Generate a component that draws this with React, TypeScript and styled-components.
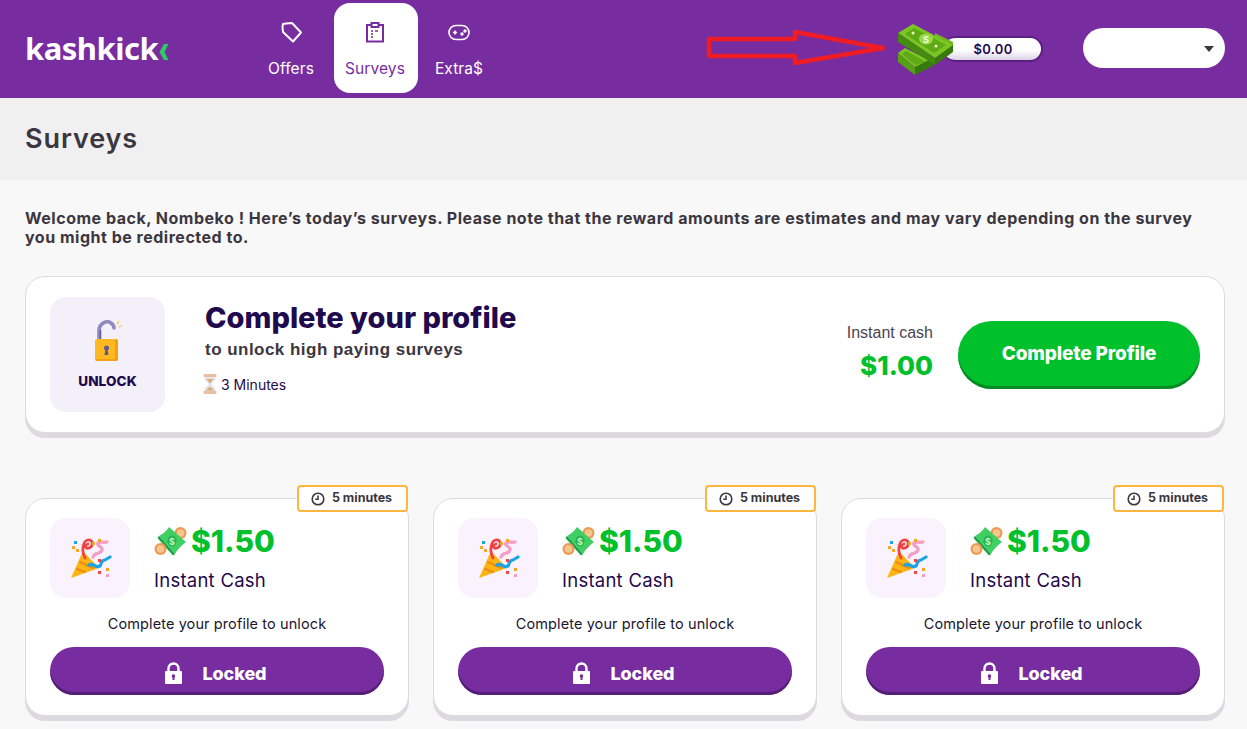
import React from "react";
import styled, { createGlobalStyle } from "styled-components";

const Global = createGlobalStyle`
  html, body { margin: 0; padding: 0; background: #f8f8f8; }
  body { font-family: Inter, "Noto Sans", sans-serif; overflow: hidden; }
  * { box-sizing: border-box; }
`;

const Page = styled.div`width: 1247px; height: 729px; overflow: hidden; position: relative;`;

const Header = styled.header`
  height: 98px; background: #772ca0; display: flex; align-items: flex-start; padding: 3px 22px 0 25px;
`;
const Logo = styled.div`
  width: 225px; height: 90px; display: flex; align-items: center; gap: 1px;
  color: #fff; font-family: "Noto Sans", sans-serif; font-weight: 700; font-size: 31px; letter-spacing: -0.5px;
`;
const Nav = styled.nav`display: flex;`;
const NavItem = styled.a<{ $active?: boolean }>`
  width: 84px; height: 90px; border-radius: 16px; display: flex; flex-direction: column; align-items: center;
  padding: 17px 2px 0 0; gap: 15px;
  background: ${p => (p.$active ? "#fff" : "transparent")};
  color: ${p => (p.$active ? "#772ca0" : "#fff")};
  font-size: 15.5px; letter-spacing: 0.1px; line-height: 20px;
  svg { display: block; }
`;
const RightGroup = styled.div`margin-left: auto; display: flex; align-items: center; height: 90px;`;
const Wallet = styled.div`
  width: 100px; height: 26px; margin-right: 40px; margin-top: 2px; position: relative;
  border-radius: 14px; background: linear-gradient(#fff 55%, #dcd3e6);
  border-top: 2px solid #5a1f80; border-bottom: 2px solid #5a1f80; border-right: 2px solid #5a1f80;
  display: flex; align-items: center; justify-content: center; padding-left: 2px;
  color: #1f0a4d; font-size: 13px; font-weight: 600; letter-spacing: .3px;
`;
const WalletIcon = styled.svg`position: absolute; left: -47px; top: -14px;`;
const Arrow = styled.svg`position: absolute; left: 705px; top: 28px;`;
const Select = styled.div`
  width: 142px; height: 40px; background: #fff; border-radius: 20px; position: relative;
  &::after { content: ""; position: absolute; right: 11px; top: 18px; border: 5px solid transparent; border-top: 6px solid #3b3640; border-bottom: 0; }
`;

const TitleBand = styled.div`height: 82px; background: #f0f0f0; padding: 0 25px; display: flex; align-items: center;`;
const Title = styled.h1`margin: 0 0 1px; font-size: 27px; font-weight: 600; color: #3b3640; letter-spacing: .9px;`;

const Main = styled.main`padding: 29px 22px 0 25px;`;
const Welcome = styled.p`margin: 0 0 29px; font-size: 16px; line-height: 19px; font-weight: 700; color: #3b3640; letter-spacing: 0.51px; width: 1190px;`;

const ProfileCard = styled.section`
  height: 157px; border-radius: 20px; background: #fff; border: 1px solid #dcdcdc;
  box-shadow: 0 5px 0 #dcdae0; padding: 20px 24px; display: flex; align-items: flex-start; margin-bottom: 65px;
`;
const UnlockTile = styled.div`
  width: 115px; height: 115px; border-radius: 16px; background: #f3f0f9; display: flex; flex-direction: column; align-items: center;
  padding-top: 23px; gap: 12px; color: #1f0a4d; font-weight: 800; font-size: 13.5px; letter-spacing: 0.1px;
`;
const ProfileText = styled.div`margin-left: 40px; display: flex; flex-direction: column;`;
const ProfileHeading = styled.h2`margin: 4px 0 0; font-size: 29px; line-height: 34px; font-weight: 800; color: #1f0a4d; letter-spacing: 0;`;
const ProfileSub = styled.div`font-family: "Liberation Sans", sans-serif; font-weight: 700; font-size: 17px; line-height: 20px; color: #3b3640; letter-spacing: .47px; margin-top: 5px;`;
const Duration = styled.div`display: flex; align-items: center; gap: 4px; margin-top: 14px; margin-left: -2px; font-size: 14px; color: #1f0a4d;`;
const Reward = styled.div`margin-left: auto; display: flex; flex-direction: column; align-items: flex-end; margin-top: 27px;`;
const RewardLabel = styled.div`font-family: "Liberation Sans", sans-serif; font-size: 16px; line-height: 18px; color: #4a4550;`;
const RewardValue = styled.div`font-size: 26px; line-height: 34px; font-weight: 800; color: #00c02b; margin-top: 7px;`;
const CompleteButton = styled.button`
  width: 242px; height: 68px; margin: 24px 0 0 25px; border: 0; border-radius: 34px; background: #00c02b;
  box-shadow: inset 0 -3px 0 #078a25; color: #fff; font: 800 19px Inter, sans-serif; letter-spacing: -0.15px; padding-bottom: 5px;
`;

const Grid = styled.div`display: grid; grid-template-columns: repeat(3, 384px); gap: 24px;`;
const SurveyCard = styled.article`
  height: 218px; background: #fff; border: 1px solid #dcdcdc; border-radius: 20px; box-shadow: 0 5px 0 #dcdae0;
  padding: 19px 24px 0; position: relative;
`;
const Badge = styled.div`
  position: absolute; right: 0; top: -14px; width: 111px; height: 27px; background: #fff; border: 2px solid #ffb63e; border-radius: 4px;
  display: flex; align-items: center; justify-content: center; gap: 7px; font-size: 12.5px; font-weight: 700; color: #3b3640; padding-bottom: 3px;
  svg { margin-top: 3px; margin-left: -2px; }
`;
const Row = styled.div`display: flex; align-items: flex-start;`;
const PartyTile = styled.div`width: 80px; height: 80px; border-radius: 16px; background: #faf3fd; display: flex; align-items: center; justify-content: center;`;
const AmountCol = styled.div`margin-left: 24px;`;
const AmountRow = styled.div`display: flex; align-items: center; gap: 4px; font-size: 30px; line-height: 46px; font-weight: 800; color: #00c02b; letter-spacing: 0;`;
const CashLabel = styled.div`font-size: 18.5px; line-height: 22px; color: #1f0a4d; letter-spacing: .25px; margin-top: 5px;`;
const Note = styled.p`margin: 16px 0 13px; text-align: center; font-size: 14.5px; line-height: 20px; color: #1c1530; letter-spacing: 0.1px;`;
const LockedButton = styled.button`
  width: 100%; height: 48px; border: 0; border-radius: 24px; background: #772ca0; box-shadow: inset 0 -3px 0 #541d76;
  color: #fff; display: flex; align-items: center; justify-content: center; gap: 20px; font: 800 18px Inter, sans-serif; padding: 4px 4px 0 0; letter-spacing: -.1px;
`;

const BigMoney = () => (
  <WalletIcon width="58" height="52" viewBox="0 0 58 52">
    <path d="M2 29 9 24 37 38 19 43Z" fill="#7cc623" />
    <path d="M6 30 10 27 30 38 19 41Z" fill="#5da916" />
    <path d="M2 29 19 43V51L2 38Z" fill="#55a015" />
    <path d="M19 43 37 34V42L19 51Z" fill="#37790f" />
    <path d="M39 9 57 18V27L39 34Z" fill="#6eb81e" />
    <path d="M2 9 17 0 57 21 39 34Z" fill="#7cc623" />
    <path d="M9 10 18 4 50 21 38 29Z" fill="#5da916" />
    <ellipse cx="30" cy="15" rx="7" ry="5.5" fill="#9bd84a" />
    <text x="30" y="18.5" fontSize="9" fontWeight="700" textAnchor="middle" fill="#f2ffe0">S</text>
    <circle cx="17" cy="9" r="1.5" fill="#e9ffc8" />
    <circle cx="40" cy="22" r="1.5" fill="#e9ffc8" />
    <path d="M2 9 39 34V41L2 18Z" fill="#438c10" />
    <path d="M39 34 57 21V28L39 41Z" fill="#367a0d" />
  </WalletIcon>
);

const UnlockIcon = () => (
  <svg width="28" height="41" viewBox="0 0 28 41">
    <path d="M5 20V11C5 3 13 0 17 3 19 4.5 20 6 20 8" fill="none" stroke="#8f8ac0" strokeWidth="3.6" strokeLinecap="round" />
    <path d="M6.5 20V10" stroke="#5f5a96" strokeWidth="1.5" />
    <path d="M23 4 25 1M25 7 28 5.5" stroke="#ffc93c" strokeWidth="1.3" />
    <rect x="1" y="19" width="23" height="22" rx="2.5" fill="#ffb81f" />
    <path d="M21 19h1a2 2 0 0 1 2 2v18a2 2 0 0 1-2 2H3a2 2 0 0 1-2-2h20Z" fill="#f4a015" />
    <circle cx="12.5" cy="28" r="2.5" fill="#5f5a86" />
    <path d="M11.5 29h2l1 6h-4Z" fill="#5f5a86" />
  </svg>
);

const Hourglass = () => (
  <svg width="14" height="20" viewBox="0 0 14 20">
    <rect x="0.5" y="0" width="13" height="3" rx="1" fill="#e8bfa0" />
    <rect x="0.5" y="17" width="13" height="3" rx="1" fill="#e8bfa0" />
    <path d="M1.5 3H12.5V5.5L8 10 12.5 14.5V17H1.5V14.5L6 10 1.5 5.5Z" fill="#e6e4ea" />
    <path d="M3.5 5H10.5L7 9.5Z M3 16.5 7 12.5 11 16.5Z" fill="#d8ab78" />
  </svg>
);

const MoneyCoins = () => (
  <svg width="33" height="30" viewBox="0 0 33 30">
    <circle cx="26.5" cy="7" r="6" fill="#ea9a54" /><circle cx="26.5" cy="7" r="3.8" fill="#f8c68c" />
    <path d="M5 10C9 8 13 4 15 1L32 16C28 19 23 24 21 28Z" fill="#3fcf65" />
    <path d="M5 10 21 28 19 29.5 3.5 12Z" fill="#16a23f" />
    <ellipse cx="18" cy="15" rx="4.5" ry="5.5" fill="#25b54e" />
    <text x="18" y="18.5" fontSize="9" fontWeight="700" textAnchor="middle" fill="#b8f5c8">$</text>
    <circle cx="6.5" cy="23" r="6" fill="#ea9a54" /><circle cx="6.5" cy="23" r="3.8" fill="#f8c68c" />
  </svg>
);

const Party = () => (
  <svg width="44" height="44" viewBox="0 0 44 44" fill="none" strokeLinecap="round">
    <path d="M3 42 15 15 31 32Z" fill="#fdb515" strokeLinejoin="round" />
    <path d="M9 33 17 36M12 26 25 32" stroke="#f08a12" strokeWidth="2" />
    <path d="M17 22C13 14 15 5 20 4 25 3 26 10 21 12 17 13 16 9 20 8" stroke="#ee4444" strokeWidth="2.8" />
    <path d="M25 21C27 15 33 19 34 14 35 10 28 10 30 7 32 5 36 7 39 6" stroke="#f4a0c4" strokeWidth="3.4" />
    <path d="M21 29C25 26 28 33 32 30 34 27 33 24 37 24L42 21" stroke="#17a4e8" strokeWidth="3.2" />
    <rect x="6" y="5" width="3" height="3" fill="#17a4e8" />
    <g fill="#f5a623"><rect x="4" y="10" width="3" height="3" /><rect x="8" y="13" width="3" height="3" /><rect x="30" y="3" width="3" height="3" /><rect x="24" y="6" width="3" height="3" /><rect x="38" y="32" width="3" height="3" /></g>
    <g fill="#ee4444"><rect x="30" y="23" width="3" height="3" /><rect x="30" y="35" width="3" height="3" /></g>
    <rect x="38" y="38" width="3" height="3" fill="#f4a0c4" />
  </svg>
);

const TagIcon = () => (
  <svg width="24" height="24" viewBox="0 0 24 24" fill="none" stroke="currentColor" strokeWidth="2" strokeLinejoin="round">
    <path d="M3.5 7 4 4 7 3.5 13 3 22 12.5 14 21.5 4 12Z" />
  </svg>
);

const ClipboardIcon = () => (
  <svg width="24" height="24" viewBox="0 0 24 24" fill="none" stroke="currentColor" strokeWidth="2">
    <path d="M8 5H4V21.5H20V5H16" />
    <path d="M8.5 3H15.5V7H8.5Z" />
    <path d="M8 11h2M8 14h2M8 17h2M12 11h3" strokeWidth="1.5" />
  </svg>
);

const PadIcon = () => (
  <svg width="24" height="24" viewBox="0 0 24 24" fill="none" stroke="currentColor" strokeWidth="1.6">
    <rect x="2" y="5.5" width="20" height="14" rx="7" />
    <path d="M6 12.5h4M8 10.5v4" />
    <circle cx="15" cy="14" r=".9" fill="currentColor" /><circle cx="18" cy="11" r=".9" fill="currentColor" />
  </svg>
);

const Clock = () => (
  <svg width="14" height="14" viewBox="0 0 14 14" fill="none" stroke="#3b3640">
    <circle cx="7" cy="7" r="5.8" strokeWidth="1.6" />
    <path d="M7 3.5V7.3H4.3" strokeWidth="1.5" />
  </svg>
);

const Lock = () => (
  <svg width="19" height="22" viewBox="0 0 18 22">
    <path d="M4 10V6.5a5 5 0 0 1 10 0V10" fill="none" stroke="#fff" strokeWidth="2.4" />
    <rect x="0.5" y="9" width="17" height="13" rx="1" fill="#fff" />
    <circle cx="9" cy="14" r="1.8" fill="#772ca0" />
    <rect x="8" y="14" width="2" height="4" fill="#772ca0" />
  </svg>
);

const Chevrons = () => (
  <svg width="10" height="18" viewBox="0 0 10 18" style={{ marginTop: 7 }}>
    <path d="M5 1 0.5 9 5 17H9.5L5.5 9 9.5 1Z" fill="#2ecb62" />
  </svg>
);

const surveyKeys = ["a", "b", "c"];

export default function App() {
  return (
    <Page>
      <Global />
      <Header>
        <Logo>kashkick<Chevrons /></Logo>
        <Nav>
          <NavItem><TagIcon />Offers</NavItem>
          <NavItem $active><ClipboardIcon />Surveys</NavItem>
          <NavItem><PadIcon />Extra$</NavItem>
        </Nav>
        <RightGroup>
          <Wallet><BigMoney />$0.00</Wallet>
          <Select />
        </RightGroup>
        <Arrow width="184" height="40" viewBox="0 0 184 40" fill="none">
          <path d="M4 11H90V4L178 20 90 35V28H4Z" stroke="#ee1c25" strokeWidth="4.5" strokeLinejoin="round" />
        </Arrow>
      </Header>
      <TitleBand><Title>Surveys</Title></TitleBand>
      <Main>
        <Welcome>Welcome back, Nombeko ! Here’s today’s surveys. Please note that the reward amounts are estimates and may vary depending on the survey you might be redirected to.</Welcome>
        <ProfileCard>
          <UnlockTile><UnlockIcon />UNLOCK</UnlockTile>
          <ProfileText>
            <ProfileHeading>Complete your profile</ProfileHeading>
            <ProfileSub>to unlock high paying surveys</ProfileSub>
            <Duration><Hourglass />3 Minutes</Duration>
          </ProfileText>
          <Reward>
            <RewardLabel>Instant cash</RewardLabel>
            <RewardValue>$1.00</RewardValue>
          </Reward>
          <CompleteButton>Complete Profile</CompleteButton>
        </ProfileCard>
        <Grid>
          {surveyKeys.map(k => (
            <SurveyCard key={k}>
              <Badge><Clock />5 minutes</Badge>
              <Row>
                <PartyTile><Party /></PartyTile>
                <AmountCol>
                  <AmountRow><MoneyCoins />$1.50</AmountRow>
                  <CashLabel>Instant Cash</CashLabel>
                </AmountCol>
              </Row>
              <Note>Complete your profile to unlock</Note>
              <LockedButton><Lock />Locked</LockedButton>
            </SurveyCard>
          ))}
        </Grid>
      </Main>
    </Page>
  );
}
